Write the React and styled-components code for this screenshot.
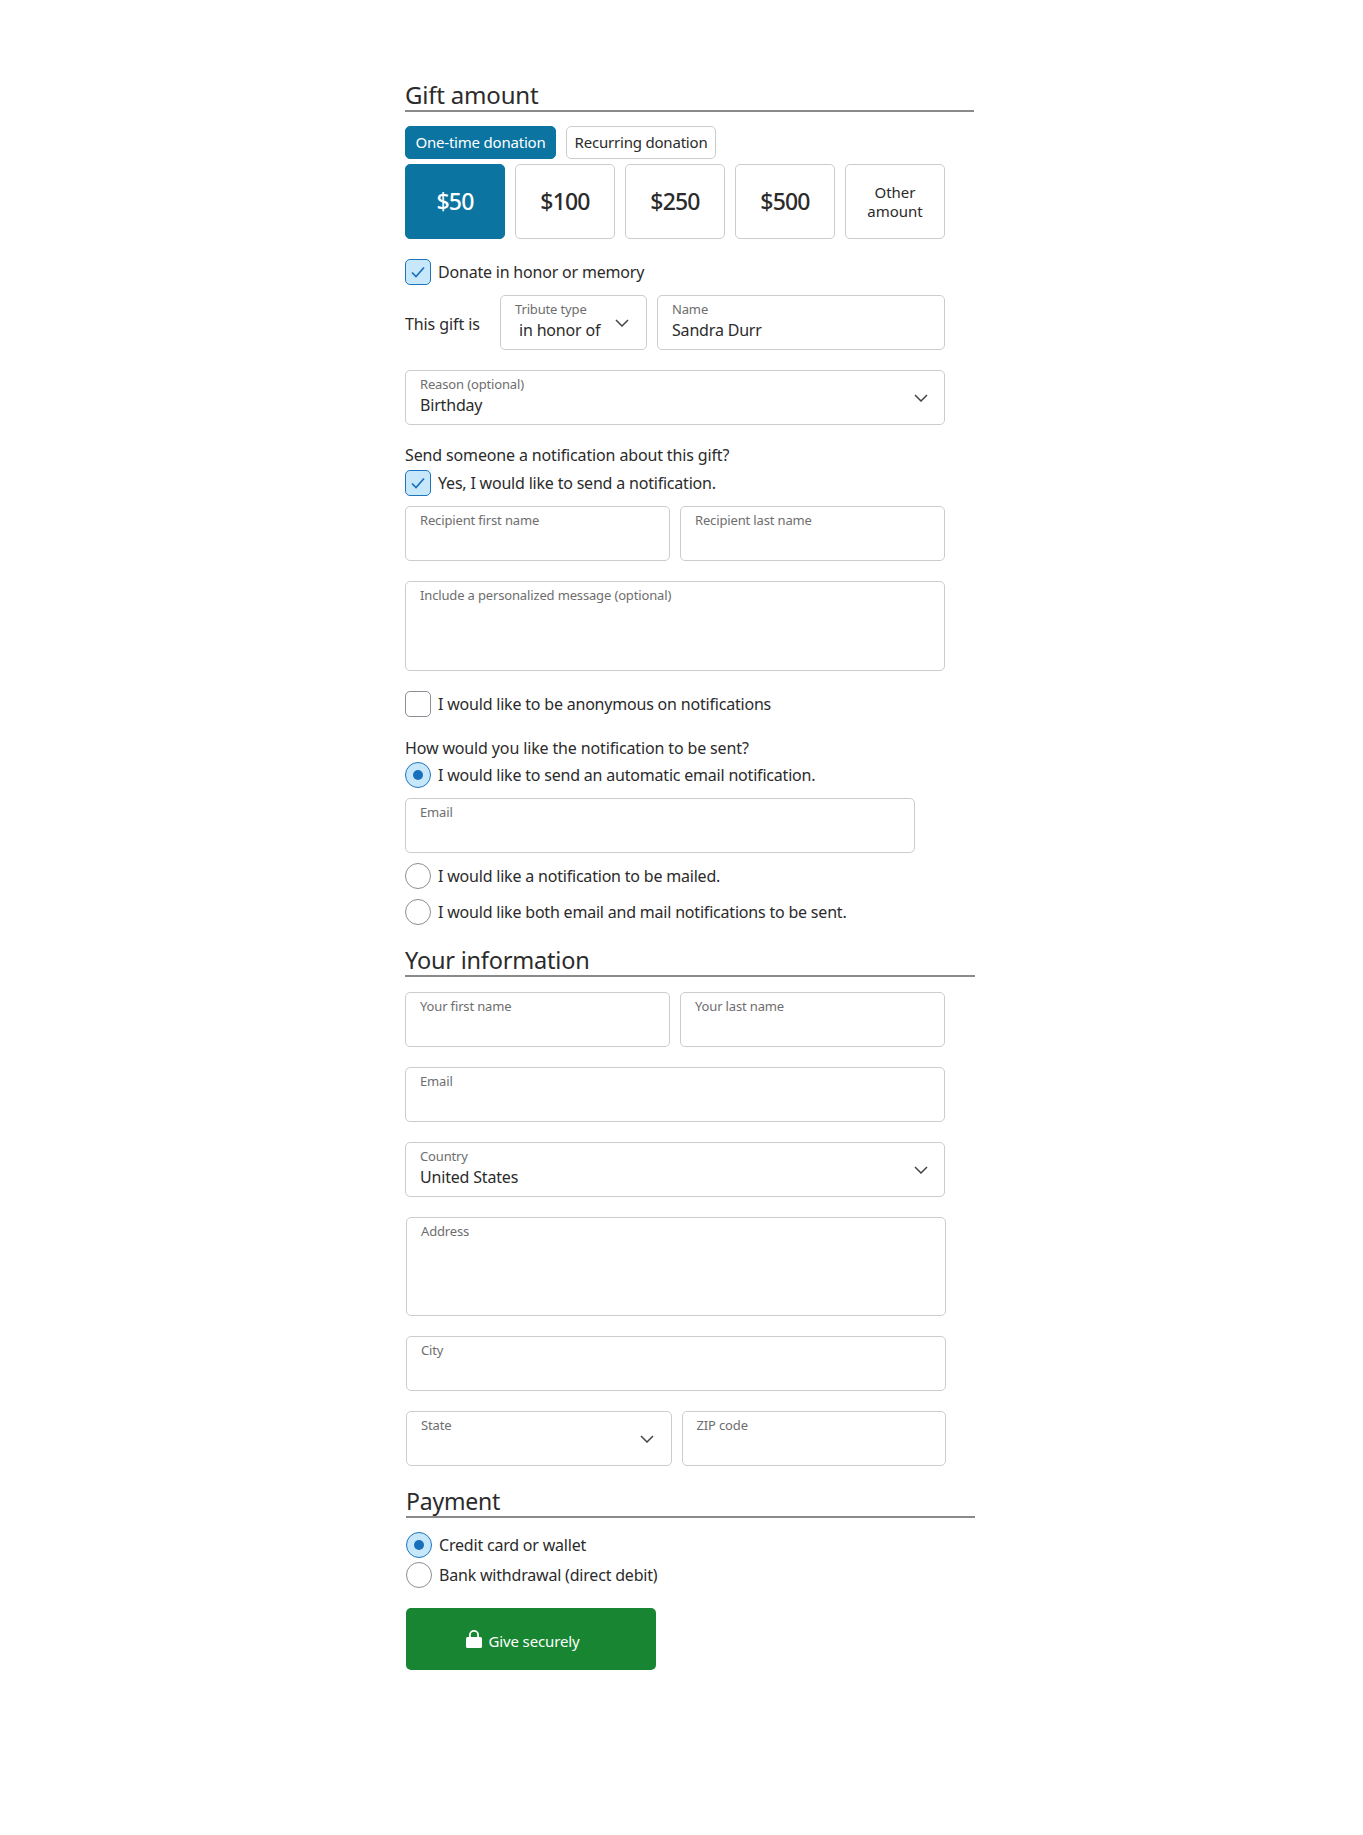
import styled, { createGlobalStyle } from "styled-components";

const GlobalStyle = createGlobalStyle`
  html, body {
    margin: 0;
    padding: 0;
    background: #fff;
    font-family: "Noto Sans", "Open Sans", sans-serif;
    color: #2b2b2b;
  }
`;

const Page = styled.div`
  width: 1363px;
  height: 1835px;
  padding: 80px 0 0 405px;
  box-sizing: border-box;
`;

const Column = styled.div`
  width: 540px;
`;

const Shifted = styled.div`
  margin-left: 1px;
  width: 540px;
`;

const Heading = styled.h2`
  margin: ${(p) => p.$top || 0}px 0 0;
  width: ${(p) => p.$width || 569}px;
  height: 32px;
  box-sizing: border-box;
  font-size: ${(p) => p.$size || 23}px;
  font-weight: 400;
  line-height: 30px;
  border-bottom: 2px solid #8a8a8a;
  color: #2b2b2b;
  letter-spacing: -0.2px;
  white-space: nowrap;
`;

const Tabs = styled.div`
  display: flex;
  gap: 10px;
  margin-top: 14px;
`;

const Tab = styled.div`
  height: 33px;
  width: ${(p) => p.$width}px;
  box-sizing: border-box;
  padding-bottom: 2px;
  display: flex;
  align-items: center;
  justify-content: center;
  font-size: 15px;
  letter-spacing: -0.2px;
  border-radius: 5px;
  background: ${(p) => (p.$active ? "#0b74a1" : "#fff")};
  color: ${(p) => (p.$active ? "#fff" : "#2b2b2b")};
  border: 1px solid ${(p) => (p.$active ? "#0b74a1" : "#ccc")};
`;

const Amounts = styled.div`
  display: flex;
  gap: 10px;
  margin-top: 5px;
`;

const Amount = styled.div`
  width: 100px;
  height: 75px;
  box-sizing: border-box;
  display: flex;
  align-items: center;
  justify-content: center;
  text-align: center;
  border-radius: 5px;
  font-size: ${(p) => (p.$small ? 15 : 23)}px;
  letter-spacing: ${(p) => (p.$small ? 0 : -0.8)}px;
  line-height: 19px;
  font-weight: ${(p) => (p.$small ? 400 : 500)};
  background: ${(p) => (p.$active ? "#0b74a1" : "#fff")};
  color: ${(p) => (p.$active ? "#fff" : "#2b2b2b")};
  border: 1px solid ${(p) => (p.$active ? "#0b74a1" : "#ccc")};
`;

const Choice = styled.div`
  display: flex;
  align-items: center;
  gap: 7px;
  height: 26px;
  margin-top: ${(p) => p.$top || 0}px;
  font-size: 16px;
  letter-spacing: -0.2px;
  white-space: nowrap;
`;

const Box = styled.span`
  width: 26px;
  height: 26px;
  box-sizing: border-box;
  flex: none;
  display: flex;
  align-items: center;
  justify-content: center;
  border-radius: ${(p) => (p.$round ? "50%" : "5px")};
  background: ${(p) => (p.$on ? "#c7e7fb" : "#fff")};
  border: 1px solid ${(p) => (p.$on ? "#1f75bd" : "#8a8f96")};
`;

const Dot = styled.span`
  width: 10px;
  height: 10px;
  border-radius: 50%;
  background: #1a6fbb;
`;

const Plain = styled.div`
  font-size: 16px;
  letter-spacing: -0.14px;
  line-height: 22px;
  margin-top: ${(p) => p.$top || 0}px;
`;

const Row = styled.div`
  display: flex;
  align-items: ${(p) => p.$align || "stretch"};
  gap: 10px;
  width: 540px;
  margin-top: ${(p) => p.$top || 0}px;
`;

const RowLabel = styled.span`
  font-size: 16px;
  letter-spacing: -0.1px;
  width: 85px;
  padding-top: 2px;
  flex: none;
`;

const Field = styled.div`
  flex: ${(p) => (p.$width ? "none" : "1")};
  width: ${(p) => (p.$width ? `${p.$width}px` : "auto")};
  height: ${(p) => p.$height || 55}px;
  margin-top: ${(p) => p.$top || 0}px;
  box-sizing: border-box;
  border: 1px solid #ccc;
  border-radius: 5px;
  padding: 4px ${(p) => (p.$tight ? 17 : 16)}px 0 14px;
  display: flex;
  justify-content: space-between;
  background: #fff;
`;

const Texts = styled.div`
  display: flex;
  flex-direction: column;
  min-width: 0;
`;

const Label = styled.span`
  font-size: 13px;
  letter-spacing: -0.15px;
  line-height: 19px;
  color: #6e6e6e;
  white-space: nowrap;
`;

const Value = styled.span`
  font-size: 16px;
  letter-spacing: -0.18px;
  line-height: 23px;
  color: #2b2b2b;
  white-space: nowrap;
  padding-left: ${(p) => p.$indent || 0}px;
`;

const Caret = styled.svg`
  width: 14px;
  height: 8px;
  flex: none;
  margin-top: 19px;
  fill: none;
  stroke: #444;
  stroke-width: 1.5;
`;

const Submit = styled.div`
  width: 250px;
  height: 62px;
  margin-top: 20px;
  padding-right: 16px;
  box-sizing: border-box;
  background: #178532;
  border-radius: 5px;
  color: #fff;
  display: flex;
  align-items: center;
  justify-content: center;
  gap: 6px;
`;

const SubmitText = styled.span`
  font-size: 15px;
  letter-spacing: -0.12px;
  padding-top: 4px;
`;

function Chevron() {
  return (
    <Caret viewBox="0 0 14 8">
      <path d="M1 1l6 6 6-6" />
    </Caret>
  );
}

function Check() {
  return (
    <svg width="14" height="12" viewBox="0 0 14 12" fill="none" stroke="#1a6fbb" strokeWidth="1.7">
      <path d="M1 6.5l4 4L13 1.5" />
    </svg>
  );
}

function Lock() {
  return (
    <svg width="16" height="18" viewBox="0 0 16 18" fill="#fff">
      <path d="M3 8V5a5 5 0 0 1 10 0v3h-1.8V5a3.2 3.2 0 0 0-6.4 0v3z" />
      <rect x="0" y="7" width="16" height="11" rx="1.5" />
    </svg>
  );
}

function Input({ label, value, select, indent, ...rest }) {
  return (
    <Field {...rest}>
      <Texts>
        <Label>{label}</Label>
        {value && <Value $indent={indent}>{value}</Value>}
      </Texts>
      {select && <Chevron />}
    </Field>
  );
}

export default function App() {
  return (
    <Page>
      <GlobalStyle />
      <Column>
        <Heading $size={24}>Gift amount</Heading>
        <Tabs>
          <Tab $active $width={151}>One-time donation</Tab>
          <Tab $width={150}>Recurring donation</Tab>
        </Tabs>
        <Amounts>
          <Amount $active>$50</Amount>
          <Amount>$100</Amount>
          <Amount>$250</Amount>
          <Amount>$500</Amount>
          <Amount $small>Other<br />amount</Amount>
        </Amounts>
        <Choice $top={20}><Box $on><Check /></Box>Donate in honor or memory</Choice>
        <Row $top={10} $align="center">
          <RowLabel>This gift is</RowLabel>
          <Input $width={147} $tight label="Tribute type" value="in honor of" indent={4} select />
          <Input label="Name" value="Sandra Durr" />
        </Row>
        <Input $top={20} label="Reason (optional)" value="Birthday" select />
        <Plain $top={19}>Send someone a notification about this gift?</Plain>
        <Choice $top={4}><Box $on><Check /></Box>Yes, I would like to send a notification.</Choice>
        <Row $top={10}>
          <Input label="Recipient first name" />
          <Input label="Recipient last name" />
        </Row>
        <Input $top={20} $height={90} label="Include a personalized message (optional)" />
        <Choice $top={20}><Box />I would like to be anonymous on notifications</Choice>
        <Plain $top={20}>How would you like the notification to be sent?</Plain>
        <Choice $top={3}><Box $on $round><Dot /></Box>I would like to send an automatic email notification.</Choice>
        <Input $top={10} $width={510} label="Email" />
        <Choice $top={10}><Box $round />I would like a notification to be mailed.</Choice>
        <Choice $top={10}><Box $round />I would like both email and mail notifications to be sent.</Choice>
        <Heading $top={20} $width={570} $size={23.5}>Your information</Heading>
        <Row $top={15}>
          <Input label="Your first name" />
          <Input label="Your last name" />
        </Row>
        <Input $top={20} label="Email" />
        <Input $top={20} label="Country" value="United States" select />
        <Shifted>
          <Input $top={20} $height={99} label="Address" />
          <Input $top={20} label="City" />
          <Row $top={20}>
            <Input $tight label="State" select />
            <Input label="ZIP code" />
          </Row>
          <Heading $top={20} $size={23}>Payment</Heading>
          <Choice $top={14}><Box $on $round><Dot /></Box>Credit card or wallet</Choice>
          <Choice $top={4}><Box $round />Bank withdrawal (direct debit)</Choice>
          <Submit><Lock /><SubmitText>Give securely</SubmitText></Submit>
        </Shifted>
      </Column>
    </Page>
  );
}
